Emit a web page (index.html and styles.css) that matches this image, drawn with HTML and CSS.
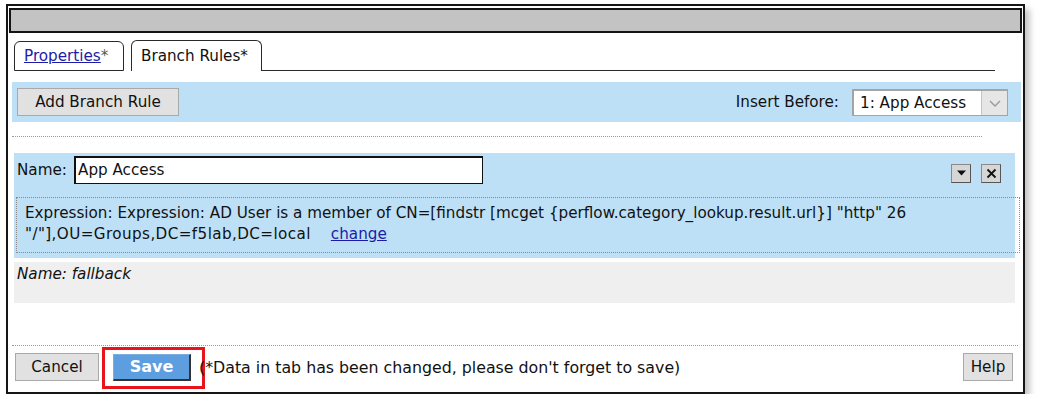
FILE: index.html
```html
<!DOCTYPE html>
<html>
<head>
<meta charset="utf-8">
<link rel="stylesheet" href="styles.css">
</head>
<body>
<div class="window">
  <div class="titlebar"></div>
  <div class="tabs">
    <div class="tab"><a class="tablink" href="#">Properties</a><span class="star">*</span></div>
    <div class="tab active">Branch Rules*</div>
    <div class="tabfill"></div>
  </div>
  <div class="toolbar">
    <button class="btn addbtn">Add Branch Rule</button>
    <div class="insert">
      <span class="insert-label">Insert Before:</span>
      <div class="select">
        <span class="select-value">1: App Access</span>
        <span class="select-arrow"><svg width="16" height="10" viewBox="0 0 16 10"><path d="M3 3 L8 8 L13 3" fill="none" stroke="#9a9a9a" stroke-width="1.4"/></svg></span>
      </div>
    </div>
  </div>
  <div class="dots short"></div>
  <div class="rule">
    <div class="name-row">
      <span class="name-label">Name:</span>
      <div class="name-input">App Access</div>
      <div class="icons">
        <span class="ibtn"><svg width="11" height="8" viewBox="0 0 11 8"><path d="M1 1.5 H10 L5.5 6.5 Z" fill="#111"/></svg></span>
        <span class="ibtn"><svg width="11" height="11" viewBox="0 0 11 11"><path d="M1.5 1.5 L9.5 9.5 M9.5 1.5 L1.5 9.5" stroke="#111" stroke-width="1.8"/></svg></span>
      </div>
    </div>
    <div class="expr">Expression: Expression: AD User is a member of CN=[findstr [mcget {perflow.category_lookup.result.url}] "http" 26<br><span class="line2">"/"],OU=Groups,DC=f5lab,DC=local</span><a class="change" href="#">change</a></div>
  </div>
  <div class="fallback">Name: fallback</div>
  <div class="dots long"></div>
  <div class="footer">
    <button class="btn cancel">Cancel</button>
    <span class="save-wrap"><button class="save">Save</button></span>
    <span class="note">(*Data in tab has been changed, please don't forget to save)</span>
    <button class="btn help">Help</button>
  </div>
</div>
</body>
</html>
```
FILE: styles.css
```css
html, body {
  margin: 0;
  padding: 0;
  background: #ffffff;
}
body {
  font-family: "DejaVu Sans", sans-serif;
  font-size: 15px;
  color: #111;
}
.window {
  box-sizing: border-box;
  margin: 4px 0 0 6px;
  width: 1019px;
  height: 390px;
  border: 2px solid #151515;
  background: #fff;
  box-shadow: 5px 5px 6px rgba(0,0,0,0.22);
  display: flex;
  flex-direction: column;
}
.titlebar {
  box-sizing: border-box;
  margin: 2px 1px 0 1px;
  height: 25px;
  background: #c3c3c3;
  border: 2px solid #141414;
}
.tabs {
  display: flex;
  align-items: flex-end;
  margin: 7px 0 0 3px;
  width: 984px;
  height: 31px;
}
.tab {
  box-sizing: border-box;
  height: 30px;
  padding: 0 9px;
  border: 1px solid #2a2a2a;
  border-radius: 6px 6px 0 0;
  display: flex;
  align-items: center;
  margin-left: 3px;
  font-size: 15.2px;
  white-space: nowrap;
}
.tab:first-child { width: 110px; }
.tab.active {
  height: 31px;
  width: 131px;
  margin-left: 7px;
  border-bottom: none;
}
.tabfill {
  flex: 1;
  border-bottom: 1px solid #2a2a2a;
}
.tablink { color: #1c1ca8; text-decoration: underline; }
.star { color: #555; }
.toolbar {
  box-sizing: border-box;
  margin: 11px 0 0 4px;
  width: 1009px;
  height: 40px;
  background: #bde0f6;
  display: flex;
  align-items: center;
  justify-content: space-between;
  padding: 0 13px 0 5px;
}
.btn {
  font-family: inherit;
  font-size: 15.2px;
  color: #111;
  background: #e1e1e1;
  border: 1px solid #a9a9a9;
  padding: 0;
  height: 28px;
}
.addbtn { width: 162px; }
.insert { display: flex; align-items: center; }
.insert-label { margin-right: 13px; font-size: 15.2px; }
.select {
  box-sizing: border-box;
  width: 156px;
  height: 27px;
  background: #fff;
  border: 2px solid #a4a4a4;
  border-right-width: 1px;
  border-bottom-width: 1px;
  display: flex;
  align-items: center;
}
.select-value { flex: 1; padding-left: 6px; font-size: 15.2px; white-space: nowrap; }
.select-arrow {
  box-sizing: border-box;
  width: 26px;
  height: 100%;
  background: #e6e6e6;
  border-left: 1px solid #c4c4c4;
  display: flex;
  align-items: center;
  justify-content: center;
}
.dots { border-top: 1px dotted #9a9a9a; height: 0; }
.dots.short { margin: 14px 0 0 4px; width: 970px; }
.dots.long { margin: 42px 0 0 4px; width: 1006px; }
.rule {
  margin: 16px 0 0 6px;
  width: 1001px;
  height: 105px;
  background: #bde0f6;
  display: flex;
  flex-direction: column;
}
.name-row {
  display: flex;
  align-items: center;
  height: 30px;
  margin-top: 2px;
  padding-left: 3px;
}
.name-label { width: 57px; font-size: 15.2px; }
.name-input {
  box-sizing: border-box;
  width: 409px;
  height: 28px;
  background: #fff;
  border: 2px solid #111;
  border-right-width: 1px;
  border-bottom-width: 1px;
  padding-left: 2px;
  line-height: 24px;
  font-size: 15.2px;
}
.icons {
  margin-left: auto;
  margin-right: 14px;
  display: flex;
  gap: 10px;
  margin-top: 6px;
}
.ibtn {
  box-sizing: border-box;
  width: 20px;
  height: 19px;
  background: #d6d6d6;
  border: 1px solid #8a8a8a;
  border-right-color: #555;
  border-bottom-color: #555;
  display: flex;
  align-items: center;
  justify-content: center;
}
.expr {
  box-sizing: border-box;
  margin: 12px 0 0 2px;
  width: 1004px;
  height: 56px;
  border: 1px dotted #8a8a8a;
  padding: 5px 0 0 8px;
  line-height: 21px;
  font-size: 15.2px;
}
.line2 { letter-spacing: 0.4px; }
.change { color: #1c1ca8; text-decoration: underline; margin-left: 20px; }
.fallback {
  box-sizing: border-box;
  margin: 4px 0 0 6px;
  width: 1001px;
  height: 41px;
  background: #efefef;
  font-style: italic;
  padding: 3px 0 0 3px;
  font-size: 15.2px;
}
.footer {
  display: flex;
  align-items: center;
  margin: 7px 0 0 7px;
  width: 998px;
}
.cancel { width: 84px; }
.save-wrap { position: relative; margin-left: 14px; display: inline-flex; }
.save {
  font-family: inherit;
  font-size: 16px;
  font-weight: bold;
  color: #fff;
  background: #5d9ee0;
  border: 1px solid #7aaee0;
  border-right: 2px solid #333;
  border-bottom: 2px solid #333;
  width: 78px;
  height: 27px;
  padding: 0;
}
.save-wrap::after {
  content: "";
  position: absolute;
  left: -11px;
  top: -7px;
  right: -14px;
  bottom: -8px;
  border: 3px solid #e8141c;
}
.note { margin-left: 8px; font-size: 15.8px; position: relative; z-index: 1; white-space: nowrap; }
.help { margin-left: auto; width: 50px; }
```
